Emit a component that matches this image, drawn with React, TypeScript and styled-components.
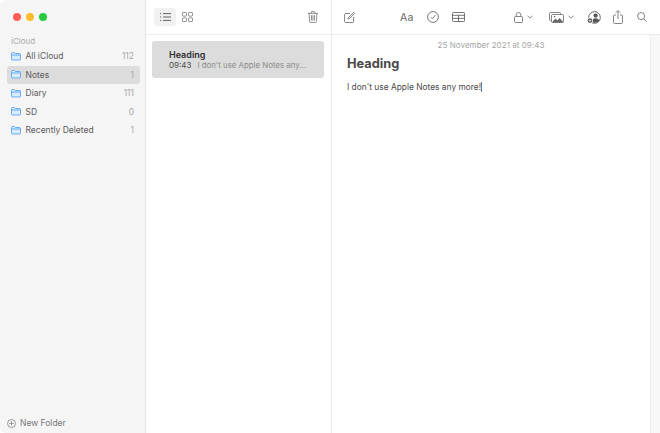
import React, { FC } from 'react'
import styled, { createGlobalStyle } from 'styled-components'

const GlobalStyle = createGlobalStyle`
  html, body {
    margin: 0;
    padding: 0;
    background: #fff;
  }
  #root {
    width: 660px;
    height: 433px;
    overflow: hidden;
  }
`

const Window = styled.div`
  width: 660px;
  height: 433px;
  display: flex;
  background: #fff;
  font-family: Inter, 'Liberation Sans', sans-serif;
  color: #4a4a4a;
`

const Sidebar = styled.aside`
  width: 145px;
  flex: none;
  display: flex;
  flex-direction: column;
  background: #f5f5f5;
  border-right: 1px solid #e4e4e4;
  border-top-left-radius: 6px;
  border-bottom-left-radius: 6px;
`

const Traffic = styled.div`
  display: flex;
  gap: 5px;
  padding: 13px 0 0 13px;
  height: 23px;
`

const Light = styled.span<{ $color: string }>`
  width: 8px;
  height: 8px;
  border-radius: 50%;
  background: ${(p) => p.$color};
`

const SectionLabel = styled.div`
  font-size: 8px;
  line-height: 10px;
  color: #a8a8a8;
  padding: 0 0 0 11px;
  margin-bottom: 1px;
`

const Folders = styled.div`
  flex: 1;
  display: flex;
  flex-direction: column;
  padding: 0 5px 0 7px;
`

const FolderRow = styled.div<{ $active?: boolean }>`
  height: 18.5px;
  display: flex;
  align-items: center;
  padding: 0 6px 0 4px;
  border-radius: 3px;
  font-size: 8.5px;
  color: #5a5a5a;
  background: ${(p) => (p.$active ? '#dcdcdc' : 'transparent')};
`

const FolderName = styled.span`
  flex: 1;
  margin-left: 4.5px;
`

const Count = styled.span`
  color: #a9a9a9;
  font-size: 8.5px;
`

const NewFolder = styled.div`
  height: 20px;
  display: flex;
  align-items: center;
  gap: 4px;
  padding-left: 7px;
  font-size: 8.5px;
  color: #777;
`

const ListPane = styled.section`
  width: 185px;
  flex: none;
  display: flex;
  flex-direction: column;
  border-right: 1px solid #ececec;
`

const Toolbar = styled.div`
  height: 34px;
  flex: none;
  display: flex;
  align-items: center;
  border-bottom: 1px solid #ececec;
  color: #666;
`

const ListToolbar = styled(Toolbar)`
  padding: 0 13px 0 8px;
  gap: 6px;
`

const ViewButton = styled.div<{ $active?: boolean }>`
  width: ${(p) => (p.$active ? '22px' : '11px')};
  height: 18px;
  display: flex;
  align-items: center;
  justify-content: center;
  border-radius: 3px;
  background: ${(p) => (p.$active ? '#f1f1f1' : 'transparent')};
`

const Spacer = styled.div<{ $w?: number }>`
  flex: ${(p) => (p.$w ? 'none' : 1)};
  width: ${(p) => (p.$w ? `${p.$w}px` : 'auto')};
`

const NoteCard = styled.div`
  margin: 6px 7px 0 6px;
  height: 37px;
  box-sizing: border-box;
  padding: 8px 0 0 17px;
  background: #dcdcdc;
  border-radius: 3px;
`

const NoteTitle = styled.div`
  font-size: 9px;
  line-height: 11px;
  font-weight: 600;
  color: #2e2e2e;
`

const NoteLine = styled.div`
  display: flex;
  gap: 6px;
  font-size: 8px;
  line-height: 10px;
  color: #4c4c4c;
  white-space: nowrap;
`

const NotePreview = styled.span`
  color: #8a8a8a;
  font-size: 7.85px;
`

const EditorPane = styled.main`
  flex: 1;
  display: flex;
  flex-direction: column;
  min-width: 0;
`

const EditorToolbar = styled(Toolbar)`
  padding: 0 13px 0 12px;
`

const Chevron = styled.span`
  margin-left: 4px;
  display: flex;
`

const EditorBody = styled.div`
  flex: 1;
  display: flex;
`

const Editor = styled.div`
  flex: 1;
  padding: 5px 15px 0 15px;
`

const DateLine = styled.div`
  text-align: center;
  font-size: 8px;
  line-height: 10px;
  letter-spacing: 0.05px;
  color: #a4a4a4;
`

const Title = styled.h1`
  margin: 4px 0 0;
  font-size: 12.8px;
  line-height: 19px;
  font-weight: 700;
  color: #4a4a4a;
`

const Body = styled.p`
  margin: 9px 0 0;
  font-size: 8.4px;
  line-height: 11px;
  color: #4a4a4a;
`

const Caret = styled.span`
  display: inline-block;
  width: 1px;
  height: 10px;
  background: #777;
  vertical-align: -2px;
`

const ScrollTrack = styled.div`
  width: 9px;
  flex: none;
  background: #f8f8f8;
  border-left: 1px solid #ececec;
`

const AaLabel = styled.span`
  font-size: 10.5px;
  color: #666;
  letter-spacing: 0.2px;
`

const FolderIcon: FC = () => (
  <svg width="10" height="9" viewBox="0 0 10 9" fill="none">
    <path d="M.5 7V1.5a1 1 0 0 1 1-1h2l1 1h4a1 1 0 0 1 1 1V7a1 1 0 0 1-1 1h-7a1 1 0 0 1-1-1Z" fill="#d8ebff" stroke="#4a9bf5" strokeWidth=".8" />
    <path d="M.5 3h9" stroke="#4a9bf5" strokeWidth=".8" />
  </svg>
)

const PlusCircle: FC = () => (
  <svg width="9" height="9" viewBox="0 0 9 9" fill="none" stroke="#777" strokeWidth=".7">
    <circle cx="4.5" cy="4.5" r="4" />
    <path d="M4.5 2.3v4.4M2.3 4.5h4.4" />
  </svg>
)

const ListIcon: FC = () => (
  <svg width="11" height="8" viewBox="0 0 11 8" stroke="#555" strokeWidth=".9" fill="none">
    <path d="M3 .6h8M3 4h8M3 7.4h8M0 .6h1.2M0 4h1.2M0 7.4h1.2" />
  </svg>
)

const GridIcon: FC = () => (
  <svg width="11" height="10" viewBox="0 0 11 10" stroke="#777" strokeWidth=".8" fill="none">
    <rect x=".5" y=".5" width="4" height="3.6" rx=".6" />
    <rect x="6.5" y=".5" width="4" height="3.6" rx=".6" />
    <rect x=".5" y="5.9" width="4" height="3.6" rx=".6" />
    <rect x="6.5" y="5.9" width="4" height="3.6" rx=".6" />
  </svg>
)

const TrashIcon: FC = () => (
  <svg width="10" height="12" viewBox="0 0 11 13" stroke="#666" strokeWidth=".8" fill="none">
    <path d="M0 2.5h11M3.5 2.5V1.4a.9.9 0 0 1 .9-.9h2.2a.9.9 0 0 1 .9.9v1.1M1.2 2.5l.6 9a1 1 0 0 0 1 1h5.4a1 1 0 0 0 1-1l.6-9M3.8 4.5l.2 6M5.5 4.5v6M7.2 4.5l-.2 6" />
  </svg>
)

const ComposeIcon: FC = () => (
  <svg width="11" height="11" viewBox="0 0 11 11" stroke="#666" strokeWidth=".8" fill="none">
    <path d="M6 1.5H1.6a1 1 0 0 0-1 1v7a1 1 0 0 0 1 1h7a1 1 0 0 0 1-1V5" />
    <path d="M4 7l.4-1.4L9.6.4l1 1-5.2 5.2Z" />
  </svg>
)

const CheckIcon: FC = () => (
  <svg width="12" height="12" viewBox="0 0 12 12" stroke="#555" strokeWidth=".8" fill="none">
    <circle cx="6" cy="6" r="5.4" />
    <path d="M3.8 6.2 5.3 7.7 8.3 4.2" />
  </svg>
)

const TableIcon: FC = () => (
  <svg width="13" height="10" viewBox="0 0 13 10" stroke="#555" strokeWidth=".8" fill="none">
    <rect x=".5" y=".5" width="12" height="9" rx=".8" />
    <path d="M.5 3.3h12M.5 6.4h12M6.5 3.3v6.2" />
  </svg>
)

const LockIcon: FC = () => (
  <svg width="9" height="11" viewBox="0 0 9 11" stroke="#666" strokeWidth=".8" fill="none">
    <rect x=".5" y="4.5" width="8" height="6" rx="1" />
    <path d="M2.2 4.5V2.8a2.3 2.3 0 0 1 4.6 0v1.7" />
  </svg>
)

const SmallChevron: FC = () => (
  <svg width="6" height="4" viewBox="0 0 6 4" stroke="#666" strokeWidth=".8" fill="none">
    <path d="M.5.7 3 3.2 5.5.7" />
  </svg>
)

const MediaIcon: FC = () => (
  <svg width="15" height="11" viewBox="0 0 15 11" stroke="#666" strokeWidth=".8" fill="none">
    <rect x=".5" y=".5" width="11" height="8" rx="1" />
    <rect x="2.5" y="2.5" width="12" height="8" rx="1" fill="#fff" />
    <path d="M3 10.2 6.5 6.5l2 2 2-2.4 4 4.1Z" fill="#666" stroke="none" />
    <circle cx="5.5" cy="4.6" r=".8" fill="#666" stroke="none" />
  </svg>
)

const CollabIcon: FC = () => (
  <svg width="14" height="13" viewBox="0 0 14 13" fill="none">
    <circle cx="7.5" cy="6.5" r="5.8" stroke="#555" strokeWidth=".9" />
    <circle cx="8.6" cy="4.6" r="2.1" fill="#555" />
    <path d="M4.6 10.4c.4-2.2 2-3.2 4-3.2s3.4 1 3.6 2.6c-1 1.2-2.6 2-4.6 2-1.2 0-2.2-.5-3-1.4Z" fill="#555" />
    <circle cx="3" cy="9.6" r="3" fill="#fff" />
    <circle cx="3" cy="9.6" r="2.3" fill="#555" />
    <path d="M3 8.4v2.4M1.8 9.6h2.4" stroke="#fff" strokeWidth=".7" />
  </svg>
)

const ShareIcon: FC = () => (
  <svg width="10" height="14" viewBox="0 0 10 14" stroke="#666" strokeWidth=".8" fill="none">
    <path d="M3 5H1.5a1 1 0 0 0-1 1v6.5a1 1 0 0 0 1 1h7a1 1 0 0 0 1-1V6a1 1 0 0 0-1-1H7" />
    <path d="M5 9V.8M2.8 2.8 5 .6l2.2 2.2" />
  </svg>
)

const SearchIcon: FC = () => (
  <svg width="10" height="10" viewBox="0 0 11 11" stroke="#666" strokeWidth=".9" fill="none">
    <circle cx="4.5" cy="4.5" r="3.9" />
    <path d="M7.4 7.4 10.6 10.6" />
  </svg>
)

const folders = [
  { name: 'All iCloud', count: 112 },
  { name: 'Notes', count: 1, active: true },
  { name: 'Diary', count: 111 },
  { name: 'SD', count: 0 },
  { name: 'Recently Deleted', count: 1 },
]

const App: FC = () => (
  <>
    <GlobalStyle />
    <Window>
      <Sidebar>
        <Traffic>
          <Light $color="#fc5f57" />
          <Light $color="#fdbb2e" />
          <Light $color="#28c83f" />
        </Traffic>
        <SectionLabel>iCloud</SectionLabel>
        <Folders>
          {folders.map((f) => (
            <FolderRow key={f.name} $active={f.active}>
              <FolderIcon />
              <FolderName>{f.name}</FolderName>
              <Count>{f.count}</Count>
            </FolderRow>
          ))}
        </Folders>
        <NewFolder>
          <PlusCircle />
          New Folder
        </NewFolder>
      </Sidebar>

      <ListPane>
        <ListToolbar>
          <ViewButton $active>
            <ListIcon />
          </ViewButton>
          <ViewButton>
            <GridIcon />
          </ViewButton>
          <Spacer />
          <TrashIcon />
        </ListToolbar>
        <NoteCard>
          <NoteTitle>Heading</NoteTitle>
          <NoteLine>
            09:43
            <NotePreview>I don't use Apple Notes any...</NotePreview>
          </NoteLine>
        </NoteCard>
      </ListPane>

      <EditorPane>
        <EditorToolbar>
          <ComposeIcon />
          <Spacer $w={45} />
          <AaLabel>Aa</AaLabel>
          <Spacer $w={13} />
          <CheckIcon />
          <Spacer $w={13} />
          <TableIcon />
          <Spacer />
          <LockIcon />
          <Chevron>
            <SmallChevron />
          </Chevron>
          <Spacer $w={16} />
          <MediaIcon />
          <Chevron>
            <SmallChevron />
          </Chevron>
          <Spacer $w={13} />
          <CollabIcon />
          <Spacer $w={12} />
          <ShareIcon />
          <Spacer $w={14} />
          <SearchIcon />
        </EditorToolbar>
        <EditorBody>
          <Editor>
            <DateLine>25 November 2021 at 09:43</DateLine>
            <Title>Heading</Title>
            <Body>
              I don't use Apple Notes any more!
              <Caret />
            </Body>
          </Editor>
          <ScrollTrack />
        </EditorBody>
      </EditorPane>
    </Window>
  </>
)

export default App
